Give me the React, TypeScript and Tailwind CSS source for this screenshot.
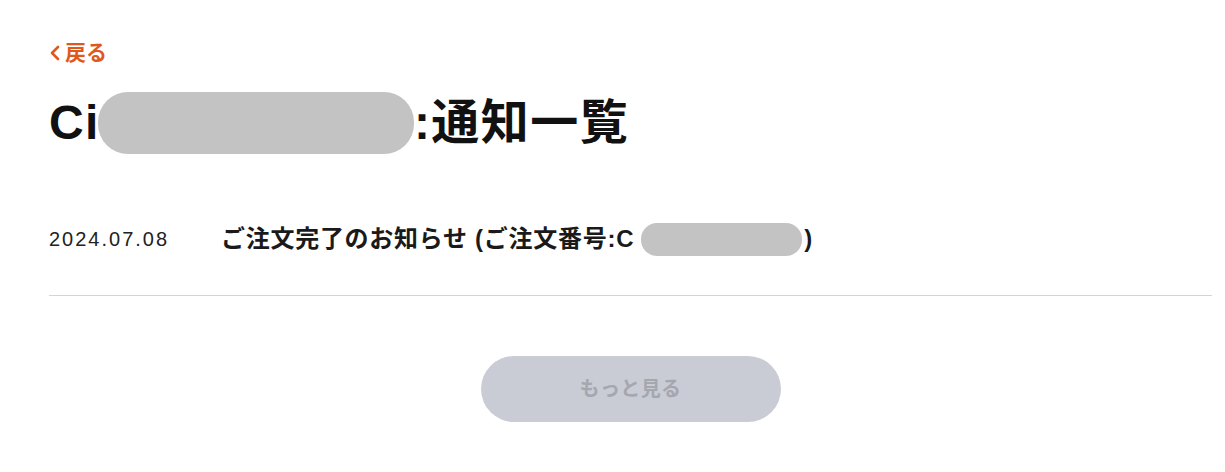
import React from 'react';

const font = "font-['Liberation_Sans','Noto_Sans_CJK_JP',sans-serif]";

function Redacted({ className }: { className: string }) {
  return <span className={`inline-block bg-[#c3c3c3] align-middle ${className}`} />;
}

export default function App() {
  return (
    <div className={`min-h-screen bg-white ${font} pl-[49px] pr-[13px] pt-[43px]`}>
      {/* back link */}
      <a href="#" className="flex h-[20px] items-center gap-[4px] text-[21px] font-bold leading-[20px] text-[#e0581c]">
        <svg width="12" height="16" viewBox="0 0 12 16" fill="none">
          <polyline points="9,2 3,8 9,14" stroke="currentColor" strokeWidth="2.6" strokeLinecap="round" strokeLinejoin="round" />
        </svg>
        <span>戻る</span>
      </a>

      <h1 className="mt-[28px] flex h-[64px] items-center text-[48px] font-bold leading-none tracking-[0.03em] text-[#111]">
        <span>Ci</span>
        <Redacted className="ml-[-2px] h-[62px] w-[316px] rounded-[30px]" />
        <span>:通知一覧</span>
      </h1>

      {/* notice list */}
      <div className="mt-[68px] border-b border-[#d4d4d4] pb-[40px]">
        <div className="flex h-[32px] items-center">
          <span className="w-[172px] shrink-0 text-[20px] tracking-[0.1em] text-[#222]">2024.07.08</span>
          <span className="flex items-center text-[24px] font-bold tracking-[0.03em] text-[#1a1a1a]">
            <span>ご注文完了のお知らせ (ご注文番号:C</span>
            <Redacted className="ml-[7px] h-[33px] w-[161px] rounded-[16px]" />
            <span className="ml-[2px]">)</span>
          </span>
        </div>
      </div>

      <div className="mt-[60px] flex justify-center">
        <button className="h-[66px] w-[300px] rounded-full bg-[#c9ccd5] text-[20px] font-bold tracking-[0.02em] text-[#a5a7af]">
          もっと見る
        </button>
      </div>
    </div>
  );
}
